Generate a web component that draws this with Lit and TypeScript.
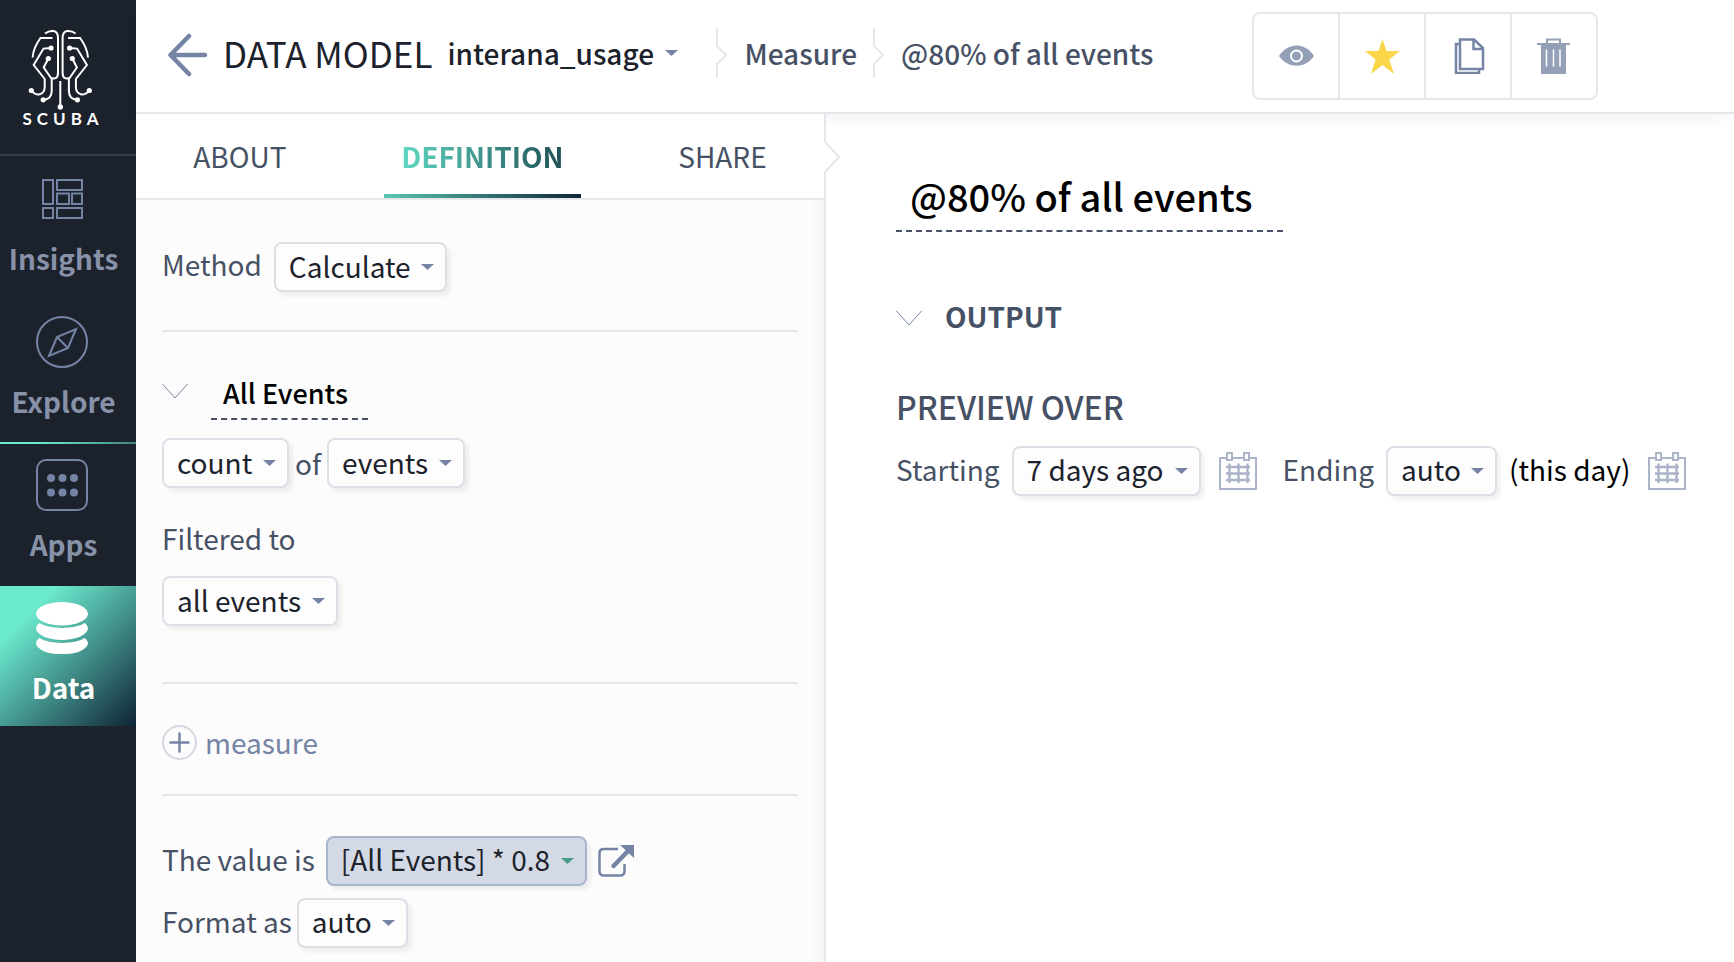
import { LitElement, html, css, svg, nothing, TemplateResult } from "lit";
import { customElement, state } from "lit/decorators.js";

const half = svg`
  <path d="M45 33.5C50 30 58 29 58 38V73C58 79 54 79 51 78L43.7 67.5L48.3 58.5"/>
  <path d="M52.5 38H40.5C36 44 33.2 50 32.6 57.5"/>
  <path d="M51 48L43.5 48.6L33.7 65L44.7 79V87C44.7 95 36 97 31.5 90.5"/>
  <path d="M51.7 78V91C51.7 97 48 99.5 43.4 99.7"/>
  <g class="node">
    <circle cx="51" cy="48" r="2.6"/><circle cx="48.3" cy="58.5" r="2.6"/>
    <circle cx="31.3" cy="90.5" r="2.6"/><circle cx="43.2" cy="99.8" r="2.6"/>
  </g>`;

const logo = html`<svg class="brain" width="68" height="82" viewBox="26 29 68 82" aria-hidden="true">
  ${half}
  <g transform="translate(120.6 0) scale(-1 1)">${half}</g>
  <path d="M60.3 81V105"/>
  <circle class="node" cx="60.3" cy="107" r="2.7"/>
</svg>`;

const navIcons: Record<string, TemplateResult> = {
  Insights: html`<svg class="line" width="52" height="52" viewBox="0 0 52 52" aria-hidden="true">
    <path d="M7 7h10v24H7zM21 7h25v10H21zM21 20.500h12v10.5H21zM36 20.500h10v10.5H36zM7 35h10v10H7zM21 35h25v10H21z"/></svg>`,
  Explore: html`<svg class="line" width="52" height="52" viewBox="0 0 52 52" aria-hidden="true">
    <circle cx="26" cy="26" r="25"/><path d="M40 13L32 32L13 40L21 21ZM21 21L32 32"/></svg>`,
  Apps: html`<svg class="line" width="52" height="52" viewBox="0 0 52 52" aria-hidden="true">
    <rect x="1" y="1" width="50" height="50" rx="9"/>
    <g class="dots"><circle cx="15" cy="19" r="4"/><circle cx="26.500" cy="19" r="4"/><circle cx="38" cy="19" r="4"/>
    <circle cx="15" cy="33.500" r="4"/><circle cx="26.500" cy="33.500" r="4"/><circle cx="38" cy="33.500" r="4"/></g></svg>`,
  Data: html`<svg width="52" height="52" viewBox="0 0 52 52" fill="#fff" aria-hidden="true">
    <ellipse cx="26" cy="11.700" rx="26" ry="11.700"/>
    <path d="M3.500 21C14 27.500 38 27.500 48.500 21C51 22.500 52 25 52 27C50 34 38 38 26 38S2 34 0 27C0 25 1 22.500 3.500 21Z"/>
    <path d="M3.500 36C14 42.500 38 42.500 48.500 36C51 37.500 52 40 52 42C50 48 40 52 30 52H22C12 52 2 48 0 42C0 40 1 37.500 3.500 36Z"/></svg>`,
};

const calendar = html`<svg width="38" height="38" viewBox="0 0 38 38" fill="none" stroke="#acb4ca" stroke-width="2" aria-hidden="true">
  <path d="M7 6H1V37H37V6H31M13 6H25"/>
  <rect x="8" y="1" width="5" height="7"/><rect x="25" y="1" width="5" height="7"/>
  <path d="M10.500 11.500V31M19.500 11.500V31M28.500 11.500V31M7 15H31M7 21.500H31M7 28H31" stroke-width="2.400"/></svg>`;

const chevron = html`<svg width="26" height="16" viewBox="0 0 26 16" fill="none" stroke="#7584a5" stroke-width="1" aria-hidden="true">
  <path d="M0 .5L13 15L26 .5"/></svg>`;

const caret = html`<svg class="caret" width="13" height="6" viewBox="0 0 13 6" aria-hidden="true"><path d="M0 0H13L6.500 6Z"/></svg>`;

const crumbEdge = (kind = "") => html`<svg class="edge ${kind}" width="12" height="50" viewBox="0 0 12 50" fill="none" stroke="#e4e8ed" stroke-width="2" aria-hidden="true">
  <path d="M1 0V18L10 27L1 36V50"/></svg>`;

const actions = [
  { name: "Preview", icon: html`<svg width="36" height="36" viewBox="0 0 36 36" aria-hidden="true">
      <path fill="#949fb8" d="M0 18C9 4 26 4 35 18C26 31 9 31 0 18Z"/>
      <circle cx="17.500" cy="18" r="5.500" fill="#949fb8" stroke="#fff" stroke-width="2"/></svg>` },
  { name: "Favorite", icon: html`<svg width="36" height="36" viewBox="0 0 36 36" aria-hidden="true">
      <path fill="#fad749" d="M17.500 1L21.500 13H35L24.200 21.500L29 36L17.500 27L6 36L10.500 21.500L0 13H13.500Z"/></svg>` },
  { name: "Duplicate", icon: html`<svg width="36" height="36" viewBox="0 0 36 36" fill="none" stroke="#7584a5" stroke-width="2.500" aria-hidden="true">
      <path d="M9 1.500H23L32 10V31H9ZM22.500 1.500V11H32M9 6H5V35H28V31"/></svg>` },
  { name: "Delete", icon: html`<svg width="36" height="36" viewBox="0 0 36 36" aria-hidden="true">
      <path fill="#949fb8" d="M0 5H33V7H29V36H4V7H0Z"/>
      <path fill="none" stroke="#949fb8" stroke-width="2" d="M10 5V1.500H23V5"/>
      <path stroke="#fff" stroke-width="1.500" stroke-linecap="round" d="M9.500 12V28M16.500 12V28M23 12V28"/></svg>` },
];

@customElement("app-root")
export class AppRoot extends LitElement {
  @state() private tab = "DEFINITION";

  static styles = css`
    :host {
      --ink: #1c222b;
      --slate: #475165;
      --steel: #7584a5;
      --rule: #e4e8ed;
      --fade: linear-gradient(135deg, #6ceacf 20%, #0f2436);
      display: grid;
      grid-template-columns: 136px minmax(0, 1fr);
      min-height: 100vh;
      overflow: hidden;
      background: #fff;
      color: var(--slate);
      font-family: "Noto Sans CJK SC", "Noto Sans", sans-serif;
      font-size: 28px;
      line-height: 36px;
    }
    * { box-sizing: border-box; }
    svg { display: block; flex: none; }
    button, select, input { font: inherit; color: inherit; margin: 0; }
    button { background: none; border: 0; padding: 0; cursor: pointer; }
    h1, h2, p { margin: 0; font: inherit; }

    .side { background: #1c222b; }
    .logo {
      display: flex; flex-direction: column; align-items: center;
      height: 156px; padding: 29px 16px 0 0;
      border-bottom: 2px solid #363d48;
      color: #fff;
    }
    .brain { fill: none; stroke: #fff; stroke-width: 2; }
    .brain .node { fill: #fff; stroke: none; }
    .word { font: 700 17px/16px Lato, sans-serif; letter-spacing: 5px; padding-left: 6px; }
    .nav { display: grid; gap: 3px; padding-top: 1px; }
    .item {
      position: relative;
      display: flex; flex-direction: column; align-items: center; gap: 15px;
      height: 140px; padding: 16px 12px 0 0;
      color: #8791a8; font-weight: 700; text-decoration: none;
    }
    .item span { padding-left: 3px; }
    .line { fill: none; stroke: var(--steel); stroke-width: 2; }
    .dots { fill: var(--steel); stroke: none; }
    .marked::before {
      content: ""; position: absolute; top: -1px; left: 0; right: 0; height: 2px;
      background: linear-gradient(90deg, #6ceacf 30%, #3f857f);
    }
    .current { background: var(--fade); color: #fff; }

    .main { display: grid; grid-template-rows: auto 1fr; }
    .head {
      position: relative;
      display: flex; align-items: center;
      height: 114px; padding: 0 136px 6px 32px;
      border-bottom: 2px solid var(--rule);
      box-shadow: 0 8px 16px -6px rgba(0, 0, 0, 0.07);
      white-space: nowrap;
      font-weight: 500;
    }
    .back { padding-top: 4px; }
    .title { margin-left: 15px; font-size: 35px; line-height: 48px; font-weight: 400; color: var(--ink); }
    .model { color: var(--ink); margin-left: 15px; }
    .edge { margin: 0 16px 0 28px; }
    .edge.next { margin-left: 16px; }
    .head a { color: inherit; text-decoration: none; }
    .actions {
      display: flex; margin: 5px 0 0 auto;
      border: 2px solid var(--rule); border-radius: 8px;
    }
    .actions button { display: grid; place-items: center; width: 86px; height: 84px; padding-left: 1px; }
    .actions button:first-child { width: 84px; }
    .actions button + button { border-left: 2px solid var(--rule); }

    .panes { display: grid; grid-template-columns: 690px minmax(0, 1fr); }
    .left {
      position: relative;
      background: linear-gradient(270deg, #f6f6f6, #fcfcfc 16px);
      border-right: 2px solid var(--rule);
    }
    .tabs {
      display: flex; justify-content: space-around;
      height: 86px;
      background: #fff; border-bottom: 2px solid var(--rule);
    }
    .tab { padding: 4px 17px 0; border-bottom: 4px solid transparent; }
    .tab.on { font-weight: 700; border-image: linear-gradient(90deg, #5ac6b3, #0f2436) 1; border-width: 0 0 4px; border-style: solid; }
    .tab.on span {
      background: linear-gradient(90deg, #5fd8c1, #1f4f56);
      background-clip: text; -webkit-background-clip: text; color: transparent;
    }
    .notch { position: absolute; top: 28px; right: -16px; }

    .body { padding: 0 26px; }
    .block { border-bottom: 2px solid var(--rule); }
    .method { padding: 42px 0 38px; }
    .method label { padding: 0 12px 6px 0; }
    .events { padding: 42px 0 56px; }
    .events .group button { padding-bottom: 12px; }
    .add { padding: 40px 0 34px; }
    .value { padding: 40px 0 14px; border: 0; }
    .row { display: flex; align-items: center; }
    .count { gap: 6px; margin-top: 18px; }
    .filter { display: block; margin: 32px 0 20px; }
    .result { gap: 11px; }
    .format { gap: 5px; margin-top: 12px; }

    .pick { display: inline-grid; align-items: center; }
    .pick > * { grid-area: 1 / 1; }
    .pick select {
      appearance: none;
      height: 50px; padding: 0 34px 2px 13px;
      line-height: 42px;
      border: 2px solid #dbdfe6; border-radius: 8px;
      background: #fdfdfd; color: var(--ink);
      box-shadow: 4px 4px 4px rgba(0, 0, 0, 0.06);
      cursor: pointer;
    }
    .caret { fill: var(--steel); justify-self: end; margin-right: 13px; pointer-events: none; }
    .pick.active select { background: #d4dae5; border-color: #a9b5cd; }
    .pick.active .caret { fill: #439d86; }
    .pick.bare select { border: 0; padding: 0 34px 0 0; background: none; box-shadow: none; font-weight: 500; }
    .pick.bare .caret { margin-right: 10px; }
    .high label, .high .note, .high .pick select { padding-bottom: 4px; }

    .edit {
      field-sizing: content;
      border: 0; border-bottom: 2px dashed var(--slate);
      background: none; color: #000; font-weight: 500; font-size: 27px;
      padding: 0 20px 8px 12px; height: 46px;
    }
    .edit.big { font-size: 38px; height: 68px; padding: 0 30px 4px 14px; }
    .group { gap: 23px; }

    .more { display: flex; align-items: center; gap: 8px; color: var(--steel); }
    .right { padding: 50px 40px 0 70px; white-space: nowrap; }
    .output { margin-top: 66px; }
    .output h2 { font-weight: 700; padding-bottom: 4px; }
    .preview { font-size: 32px; line-height: 44px; font-weight: 500; margin: 46px 0 18px; }
    .start { margin-right: 12px; }
    .end { margin: 0 12px 0 26px; }
    .cal { margin-left: 18px; }
    .note { color: #000; margin-left: 12px; }
  `;

  private pick(id: string, value: string, kind = "", name = "") {
    return html`<span class="pick ${kind}">
      <select id=${id} aria-label=${name || nothing}><option>${value}</option></select>${caret}
    </span>`;
  }

  render() {
    return html`
      <aside class="side">
        <div class="logo">${logo}<span class="word">SCUBA</span></div>
        <nav class="nav">
          ${["Insights", "Explore", "Apps", "Data"].map(
            (n) => html`<a href="#${n.toLowerCase()}" class="item ${n === "Apps" ? "marked" : n === "Data" ? "current" : ""}">
              ${navIcons[n]}<span>${n}</span></a>`
          )}
        </nav>
      </aside>
      <div class="main">
        <header class="head">
          <button class="back" aria-label="Back">
            <svg width="40" height="44" viewBox="0 0 40 44" fill="none" stroke="#7584a5" stroke-width="4.500" stroke-linecap="round" stroke-linejoin="round" aria-hidden="true">
              <path d="M21 3L2.500 22L21 41M3 22H37"/></svg>
          </button>
          <h1 class="title">DATA MODEL</h1>
          <span class="model">${this.pick("dataset", "interana_usage", "bare", "Dataset")}</span>
          ${crumbEdge()}
          <a href="#measure">Measure</a>
          ${crumbEdge("next")}
          <span>@80% of all events</span>
          <div class="actions">
            ${actions.map((a) => html`<button aria-label=${a.name}>${a.icon}</button>`)}
          </div>
        </header>
        <div class="panes">
          <section class="left">
            <div class="tabs" role="tablist">
              ${["ABOUT", "DEFINITION", "SHARE"].map(
                (t) => html`<button role="tab" class="tab ${t === this.tab ? "on" : ""}" aria-selected=${t === this.tab}
                  @click=${() => (this.tab = t)}><span>${t}</span></button>`
              )}
            </div>
            <svg class="notch" width="16" height="30" viewBox="0 0 16 30" fill="#fff" stroke="#e4e8ed" stroke-width="2" aria-hidden="true">
              <path stroke="none" d="M0 0L15 15L0 30Z"/><path d="M1 0L15 15L1 30"/></svg>
            <div class="body">
              <div class="block method row"><label for="method">Method</label>${this.pick("method", "Calculate")}</div>
              <div class="block events">
                <div class="row group">
                  <button aria-label="Collapse All Events">${chevron}</button>
                  <input class="edit" aria-label="Measure name" value="All Events" />
                </div>
                <div class="row count">
                  ${this.pick("aggregate", "count", "", "Aggregate")}<label for="unit">of</label>${this.pick("unit", "events")}
                </div>
                <label class="filter" for="filter">Filtered to</label>
                ${this.pick("filter", "all events")}
              </div>
              <div class="block add">
                <button class="more">
                  <svg width="35" height="35" viewBox="0 0 35 35" fill="none" stroke-width="2" aria-hidden="true">
                    <circle cx="17.500" cy="17.500" r="16.500" stroke="#d5d8e3"/>
                    <path d="M17.500 8.500V26.500M8.500 17.500H26.500" stroke="#7584a5" stroke-width="2.500" stroke-linecap="round"/></svg>
                  <span>measure</span>
                </button>
              </div>
              <div class="block value">
                <div class="row result high">
                  <label for="formula">The value is</label>${this.pick("formula", "[All Events] * 0.8", "active")}
                  <button aria-label="Open formula editor">
                    <svg width="36" height="34" viewBox="0 0 36 34" fill="none" stroke="#7584a5" stroke-width="2.500" aria-hidden="true">
                      <path d="M20 5H6Q1.500 5 1.500 9V27Q1.500 31.500 6 31.500H22Q26.500 31.500 26.500 27V20"/>
                      <path d="M15.500 22L30 7" stroke-width="4.500" stroke-linecap="round"/><path d="M22 1H36V14Z" fill="#7584a5" stroke="none"/></svg>
                  </button>
                </div>
                <div class="row format high"><label for="format">Format as</label>${this.pick("format", "auto")}</div>
              </div>
            </div>
          </section>
          <section class="right">
            <input class="edit big" aria-label="Title" value="@80% of all events" />
            <div class="row output group"><button aria-label="Collapse output">${chevron}</button><h2>OUTPUT</h2></div>
            <h2 class="preview">PREVIEW OVER</h2>
            <div class="row high">
              <label class="start" for="start">Starting</label>${this.pick("start", "7 days ago")}
              <button class="cal" aria-label="Choose start date">${calendar}</button>
              <label class="end" for="end">Ending</label>${this.pick("end", "auto")}
              <span class="note">(this day)</span>
              <button class="cal" aria-label="Choose end date">${calendar}</button>
            </div>
          </section>
        </div>
      </div>
    `;
  }
}
